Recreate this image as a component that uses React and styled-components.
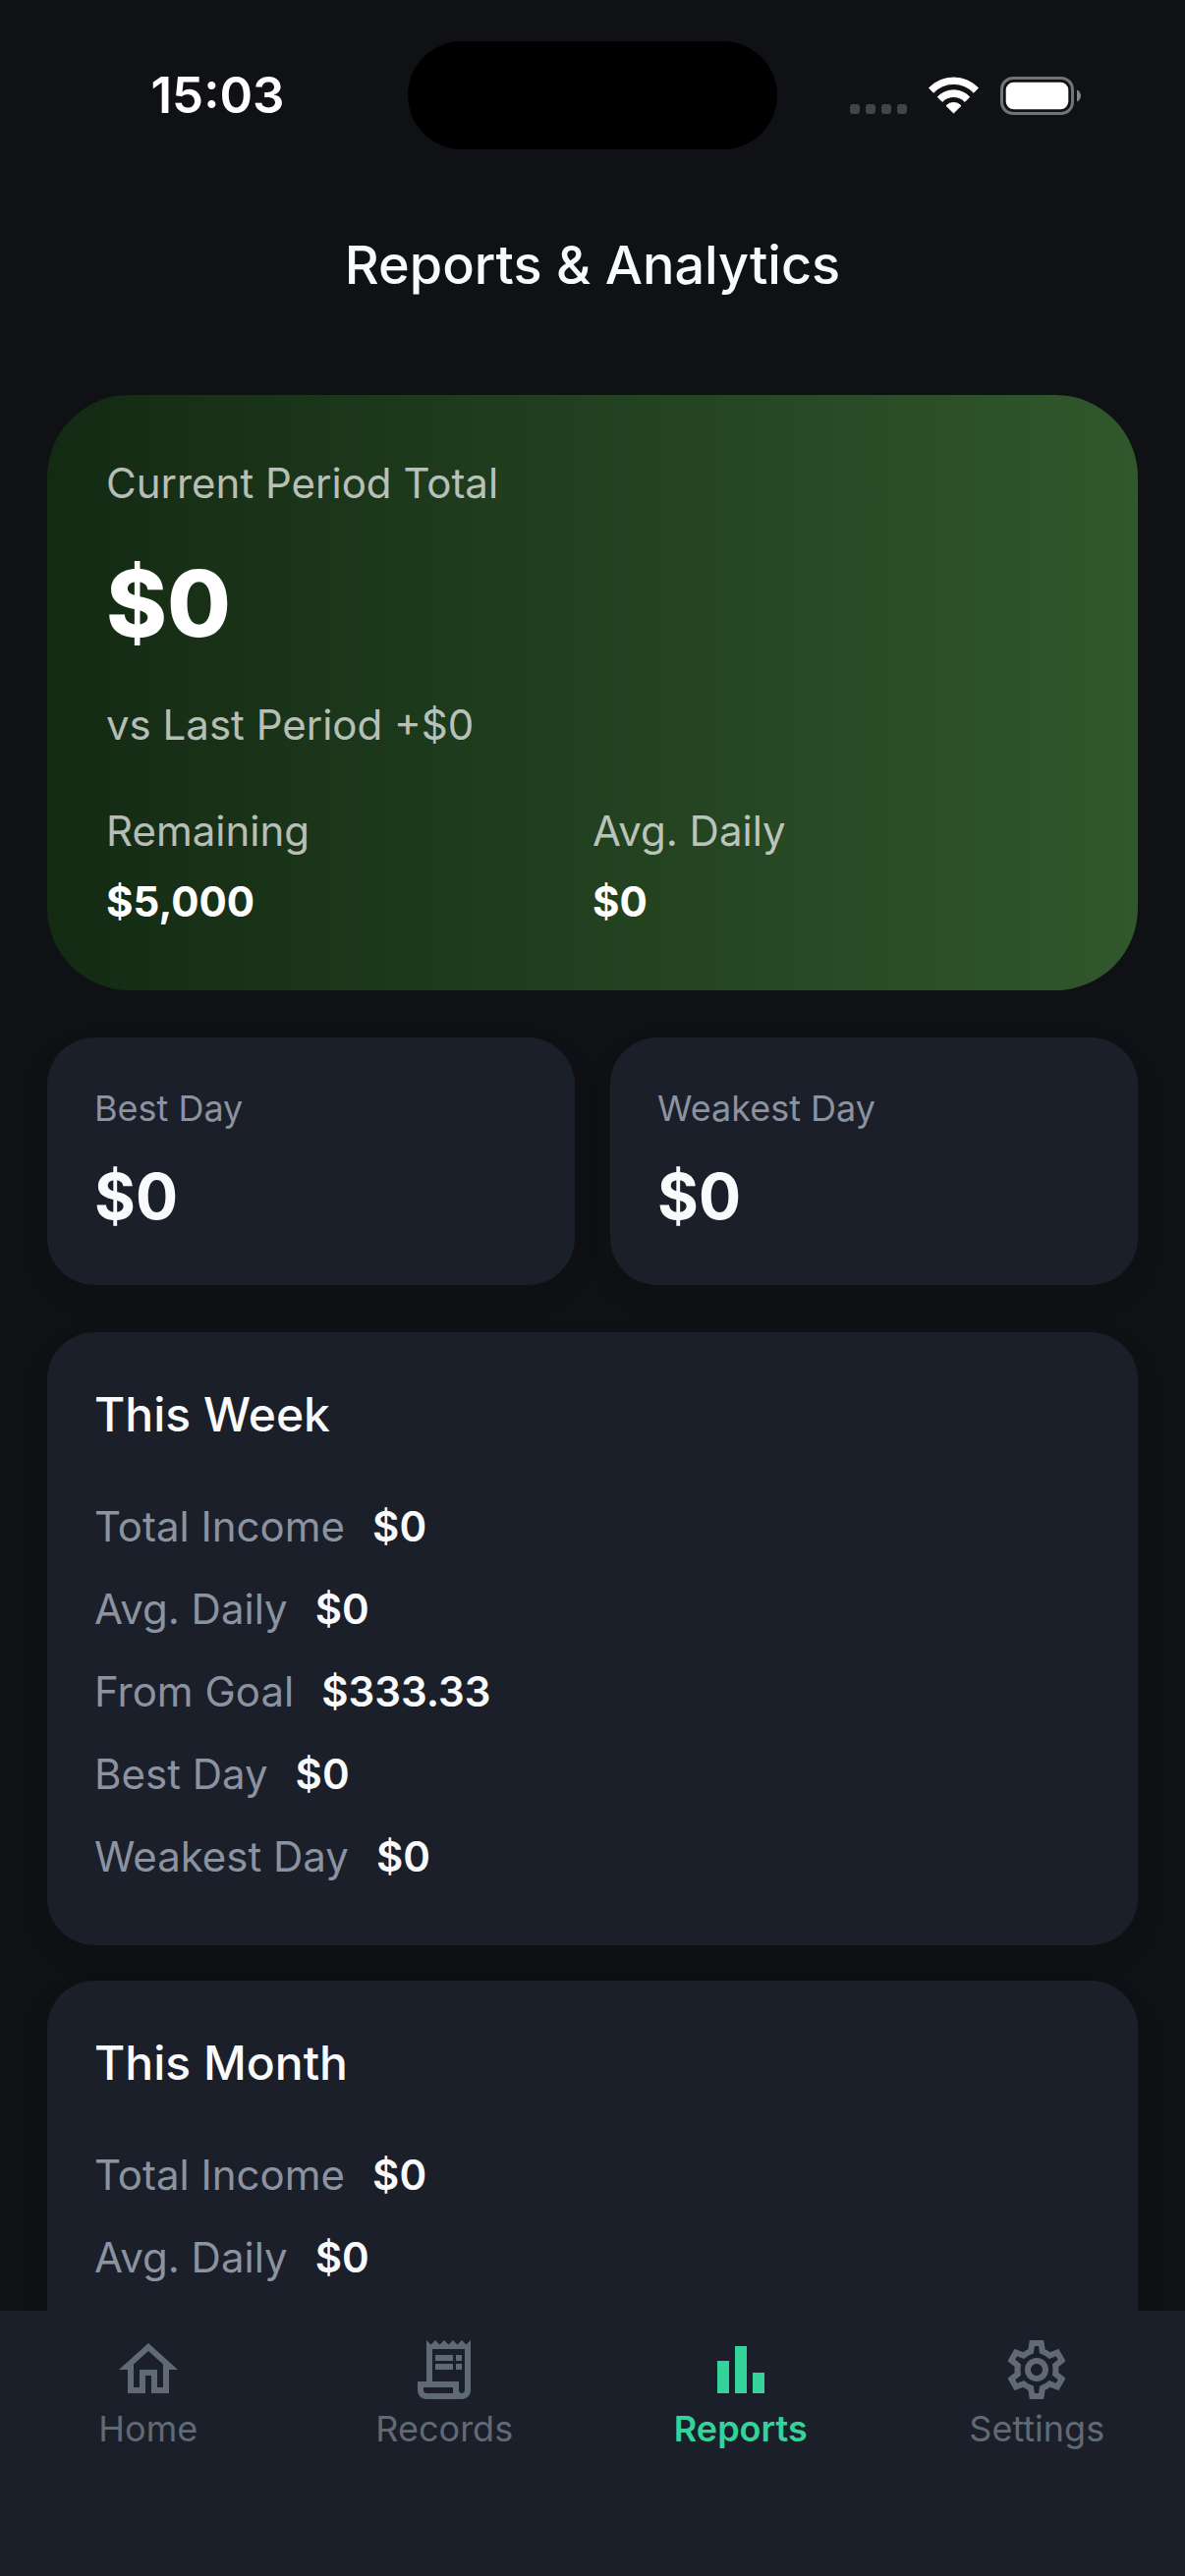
import React from "react";
import styled, { createGlobalStyle } from "styled-components";
import {
  MdBarChart,
  MdOutlineHome,
  MdOutlineReceiptLong,
  MdOutlineSettings
} from "react-icons/md";

const GlobalStyle = createGlobalStyle`
  * {
    box-sizing: border-box;
  }
  body {
    margin: 0;
    background: #0f1115;
    font-family: Inter, "Liberation Sans", sans-serif;
  }
  h1, h2, p, dl, dt, dd {
    margin: 0;
  }
`;

const Screen = styled.div`
  display: flex;
  flex-direction: column;
  height: 100vh;
  color: #f9fafb;
`;

const StatusBar = styled.div`
  display: grid;
  grid-template-columns: 1fr 376px 1fr;
  align-items: center;
  justify-items: center;
  padding: 42px 0 34px;
`;

const Time = styled.span`
  padding-left: 28px;
  color: white;
  font-size: 51px;
  font-weight: 600;
  line-height: 62px;
`;

const Island = styled.div`
  width: 100%;
  height: 110px;
  border-radius: 55px;
  background: black;
`;

const StatusIcons = styled.div`
  display: flex;
  align-items: center;
  gap: 22px;
  padding-right: 32px;
`;

const Header = styled.header`
  display: flex;
  align-items: center;
  justify-content: center;
  min-height: 168px;

  h1 {
    font-size: 54px;
    font-weight: 500;
    line-height: 72px;
  }
`;

const Content = styled.main`
  flex: 1;
  min-height: 0;
  padding: 48px 48px 0;
  overflow-y: auto;
  scrollbar-width: none;
`;

const Hero = styled.section`
  padding: 60px;
  border-radius: 84px;
  background: linear-gradient(to right, #132a13, #31572c);
  color: white;
`;

const HeroLabel = styled.p`
  color: rgba(255, 255, 255, 0.7);
  font-size: 42px;
  line-height: 60px;
`;

const HeroTotal = styled.p`
  margin: 26px 0 28px;
  font-size: 94px;
  font-weight: 800;
  line-height: 132px;
`;

const HeroStats = styled.div`
  display: grid;
  grid-template-columns: 1fr 1fr;
  margin-top: 48px;
`;

const HeroValue = styled.p`
  margin-top: 12px;
  font-size: 42px;
  font-weight: 700;
  line-height: 60px;
`;

const Card = styled.section`
  padding: 48px;
  border-radius: 48px;
  background: #1b1f29;
  box-shadow: 0 12px 36px rgba(0, 0, 0, 0.05);
`;

const DayCards = styled.div`
  display: grid;
  grid-template-columns: 1fr 1fr;
  gap: 36px;
  margin: 48px 0;
`;

const DayLabel = styled.p`
  color: #8b93a0;
  font-size: 36px;
  line-height: 48px;
`;

const DayValue = styled.p`
  margin-top: 24px;
  font-size: 64px;
  font-weight: 700;
  line-height: 84px;
`;

const Periods = styled.div`
  display: flex;
  flex-direction: column;
  gap: 36px;

  > :last-child {
    padding-bottom: 96px;
  }
`;

const PeriodTitle = styled.h2`
  margin-bottom: 36px;
  font-size: 48px;
  font-weight: 500;
  line-height: 72px;
`;

const StatRow = styled.div`
  display: flex;
  gap: 28px;
  padding: 12px 0;
  font-size: 42px;
  line-height: 60px;

  dt {
    color: #8b93a0;
  }
  dd {
    font-weight: 600;
  }
`;

const TabBar = styled.nav`
  display: grid;
  grid-template-columns: repeat(4, 1fr);
  padding: 24px 0 126px;
  background: #1b1f29;
`;

const Tab = styled.a`
  display: flex;
  flex-direction: column;
  align-items: center;
  color: ${props => (props.$active ? "#34d399" : "#606a76")};
  font-size: 36px;
  font-weight: ${props => (props.$active ? 600 : 400)};
  line-height: 48px;
  text-decoration: none;

  svg {
    width: 72px;
    height: 72px;
  }
`;

const days = [
  { label: "Best Day", value: "$0" },
  { label: "Weakest Day", value: "$0" }
];

const periods = [
  {
    title: "This Week",
    stats: [
      ["Total Income", "$0"],
      ["Avg. Daily", "$0"],
      ["From Goal", "$333.33"],
      ["Best Day", "$0"],
      ["Weakest Day", "$0"]
    ]
  },
  {
    title: "This Month",
    stats: [
      ["Total Income", "$0"],
      ["Avg. Daily", "$0"]
    ]
  }
];

const tabs = [
  { label: "Home", Icon: MdOutlineHome },
  { label: "Records", Icon: MdOutlineReceiptLong },
  { label: "Reports", Icon: MdBarChart, active: true },
  { label: "Settings", Icon: MdOutlineSettings }
];

const SignalIcon = () => (
  <svg width="58" height="38" fill="#434448">
    {[0, 16, 32, 48].map(x => (
      <rect key={x} x={x} y="28" width="10" height="10" rx="3" />
    ))}
  </svg>
);

const WifiIcon = () => (
  <svg
    width="51"
    height="38"
    fill="white"
    stroke="white"
    strokeLinejoin="round"
  >
    <path d="M.5 11.5A35 35 0 0 1 50.5 11.5L46 16.3A28 28 0 0 0 5 16.3Z" />
    <path d="M9.3 20.7A22.5 22.5 0 0 1 41.7 20.7L37 25.4A16 16 0 0 0 14 25.4Z" />
    <path d="M18 29.6A10.5 10.5 0 0 1 33 29.6L25.5 37Z" />
  </svg>
);

const BatteryIcon = () => (
  <svg width="82" height="39">
    <rect
      x="1.5"
      y="1.5"
      width="72"
      height="36"
      rx="11.5"
      fill="none"
      stroke="#727377"
      strokeWidth="3"
    />
    <rect x="5.7" y="5.7" width="63.6" height="27.6" rx="8" fill="white" />
    <path d="M78 13.5C83.3 15.5 83.3 23.5 78 25.5Z" fill="#85868a" />
  </svg>
);

const PeriodCard = ({ title, stats }) => (
  <Card>
    <PeriodTitle>{title}</PeriodTitle>
    <dl>
      {stats.map(([label, value]) => (
        <StatRow key={label}>
          <dt>{label}</dt>
          <dd>{value}</dd>
        </StatRow>
      ))}
    </dl>
  </Card>
);

const App = () => (
  <Screen>
    <GlobalStyle />
    <StatusBar>
      <Time>15:03</Time>
      <Island />
      <StatusIcons>
        <SignalIcon />
        <WifiIcon />
        <BatteryIcon />
      </StatusIcons>
    </StatusBar>
    <Header>
      <h1>Reports &amp; Analytics</h1>
    </Header>
    <Content>
      <Hero>
        <HeroLabel>Current Period Total</HeroLabel>
        <HeroTotal>$0</HeroTotal>
        <HeroLabel>vs Last Period +$0</HeroLabel>
        <HeroStats>
          <div>
            <HeroLabel>Remaining</HeroLabel>
            <HeroValue>$5,000</HeroValue>
          </div>
          <div>
            <HeroLabel>Avg. Daily</HeroLabel>
            <HeroValue>$0</HeroValue>
          </div>
        </HeroStats>
      </Hero>
      <DayCards>
        {days.map(({ label, value }) => (
          <Card key={label}>
            <DayLabel>{label}</DayLabel>
            <DayValue>{value}</DayValue>
          </Card>
        ))}
      </DayCards>
      <Periods>
        {periods.map(period => (
          <PeriodCard key={period.title} {...period} />
        ))}
      </Periods>
    </Content>
    <TabBar>
      {tabs.map(({ label, Icon, active }) => (
        <Tab
          key={label}
          href={`#${label.toLowerCase()}`}
          $active={active}
          aria-current={active ? "page" : undefined}
        >
          <Icon />
          {label}
        </Tab>
      ))}
    </TabBar>
  </Screen>
);

export default App;
